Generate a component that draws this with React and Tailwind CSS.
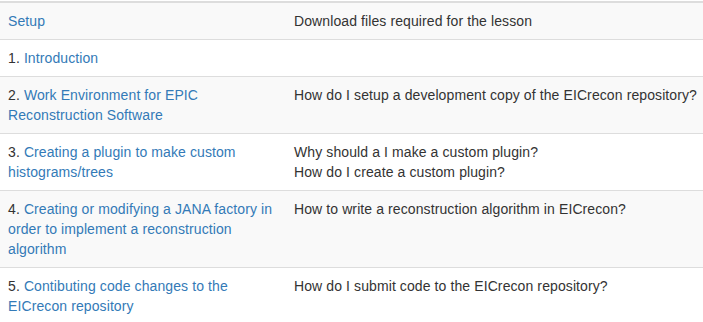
import React from "react";

const rows = [
  { num: "", title: "Setup", desc: ["Download files required for the lesson"] },
  { num: "1. ", title: "Introduction", desc: [] },
  {
    num: "2. ",
    title: "Work Environment for EPIC Reconstruction Software",
    desc: ["How do I setup a development copy of the EICrecon repository?"],
  },
  {
    num: "3. ",
    title: "Creating a plugin to make custom histograms/trees",
    desc: ["Why should a I make a custom plugin?", "How do I create a custom plugin?"],
  },
  {
    num: "4. ",
    title: "Creating or modifying a JANA factory in order to implement a reconstruction algorithm",
    desc: ["How to write a reconstruction algorithm in EICrecon?"],
  },
  {
    num: "5. ",
    title: "Contibuting code changes to the EICrecon repository",
    desc: ["How do I submit code to the EICrecon repository?"],
  },
];

const App = () => {
  return (
    <div
      className="w-[703px] h-[322px] overflow-hidden bg-white pt-px text-[14px] leading-[20px] tracking-[0.1px] text-[#333]"
      style={{ fontFamily: '"Liberation Sans", Arial, sans-serif' }}
    >
      <table className="w-full border-collapse table-fixed">
        <tbody>
          {rows.map((row, i) => (
            <tr
              key={i}
              className={`${i % 2 === 0 ? "bg-[#f9f9f9]" : "bg-white"} ${
                i === 0 ? "border-t-2" : "border-t"
              } border-[#ddd]`}
            >
              <td className="w-[286px] p-2 align-top">
                <span>
                  {row.num}
                  <a href="#" className="text-[#337ab7] no-underline">
                    {row.title}
                  </a>
                </span>
              </td>
              <td className="p-2 align-top whitespace-nowrap">
                {row.desc.map((d, j) => (
                  <div key={j}>{d}</div>
                ))}
              </td>
            </tr>
          ))}
        </tbody>
      </table>
    </div>
  );
};

export default App;
